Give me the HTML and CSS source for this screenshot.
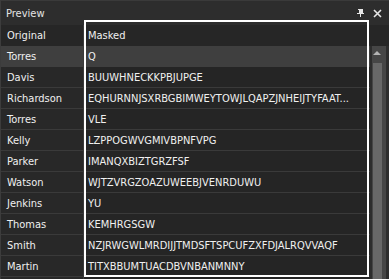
FILE: index.html
```html
<!DOCTYPE html>
<html lang="en">
<head>
    <meta charset="UTF-8">
    <title>Preview</title>
    <link rel="stylesheet" href="styles.css">
</head>
<body>
    <div class="panel">
        <div class="titlebar">
            <span class="title">Preview</span>
            <span class="tools">
                <svg class="pin" width="9" height="8" viewBox="0 0 9 8">
                    <rect x="2" y="0" width="5" height="1" fill="#e6e6e6"/>
                    <rect x="3" y="1" width="4" height="4" fill="#e6e6e6"/>
                    <rect x="1" y="4" width="7" height="1" fill="#e6e6e6"/>
                    <rect x="4" y="5" width="1" height="3" fill="#e6e6e6"/>
                </svg>
                <svg class="close" width="9" height="9" viewBox="0 0 9 9">
                    <path d="M1 1 L8 8 M8 1 L1 8" stroke="#e6e6e6" stroke-width="1.6"/>
                </svg>
            </span>
        </div>

        <div class="header-row">
            <div class="cell first">Original</div>
            <div class="cell">Masked</div>
        </div>

        <div class="content">
            <div class="rows">
                <div class="row selected"><div class="cell first">Torres</div><div class="cell">Q</div></div>
                <div class="row"><div class="cell first">Davis</div><div class="cell">BUUWHNECKKPBJUPGE</div></div>
                <div class="row"><div class="cell first">Richardson</div><div class="cell">EQHURNNJSXRBGBIMWEYTOWJLQAPZJNHEIJTYFAAT...</div></div>
                <div class="row"><div class="cell first">Torres</div><div class="cell">VLE</div></div>
                <div class="row"><div class="cell first">Kelly</div><div class="cell">LZPPOGWVGMIVBPNFVPG</div></div>
                <div class="row"><div class="cell first">Parker</div><div class="cell">IMANQXBIZTGRZFSF</div></div>
                <div class="row"><div class="cell first">Watson</div><div class="cell">WJTZVRGZOAZUWEEBJVENRDUWU</div></div>
                <div class="row"><div class="cell first">Jenkins</div><div class="cell">YU</div></div>
                <div class="row"><div class="cell first">Thomas</div><div class="cell">KEMHRGSGW</div></div>
                <div class="row"><div class="cell first">Smith</div><div class="cell">NZJRWGWLMRDIJJTMDSFTSPCUFZXFDJALRQVVAQF</div></div>
                <div class="row"><div class="cell first">Martin</div><div class="cell">TITXBBUMTUACDBVNBANMNNY</div></div>
                <div class="row"><div class="cell first"></div><div class="cell"></div></div>
            </div>
            <div class="vscroll">
                <div class="arrow"></div>
                <div class="thumb"></div>
            </div>
        </div>

        <div class="focus-frame"></div>
    </div>
</body>
</html>
```

FILE: styles.css
```css
body {
    margin: 0;
    background: #2d2d2d;
    font-family: 'DejaVu Sans Condensed', 'DejaVu Sans', sans-serif;
    font-size: 11px;
    color: #f0f0f0;
    overflow: hidden;
}

.panel {
    position: relative;
    width: 389px;
    height: 279px;
    overflow: hidden;
    border-left: 1px solid #3c3c3c;
    box-sizing: border-box;
}

.titlebar {
    height: 25px;
    display: flex;
    align-items: center;
    justify-content: space-between;
    padding: 0 7px 0 5px;
    background: #2d2d2d;
    border-top: 1px solid #3a3a3a;
    box-sizing: border-box;
}

.title {
    color: #e4e4e4;
}

.tools {
    display: flex;
    align-items: center;
    gap: 8px;
}

.header-row {
    display: grid;
    grid-template-columns: 83px 1fr;
    height: 21px;
    background: #262626;
}

.content {
    display: flex;
}

.rows {
    width: 369px;
    background: #252525;
}

.row {
    display: grid;
    grid-template-columns: 83px 1fr;
    height: 21px;
    border-bottom: 1px solid #3a3a3a;
    box-sizing: border-box;
}

.row.selected {
    background: #3f3f3f;
    border-bottom: none;
}

.cell {
    display: flex;
    align-items: center;
    padding-left: 4px;
    white-space: nowrap;
    overflow: hidden;
}

.cell.first {
    padding-left: 6px;
    border-right: 1px solid #3a3a3a;
}

.row .cell.first {
    background: #282828;
}

.row.selected .cell.first {
    background: #3f3f3f;
}

.vscroll {
    width: 14px;
    margin-left: 2px;
    background: #464646;
    height: 233px;
}

.arrow {
    width: 0;
    height: 0;
    margin: 5px 0 0 1px;
    border-left: 4px solid transparent;
    border-right: 4px solid transparent;
    border-bottom: 4px solid #b4b4b4;
}

.thumb {
    width: 9px;
    height: 230px;
    margin: 8px 0 0 1px;
    background: #686868;
}

.focus-frame {
    position: absolute;
    left: 83px;
    top: 20px;
    width: 285px;
    height: 257px;
    border: 2px solid #ffffff;
    box-sizing: border-box;
}
```
